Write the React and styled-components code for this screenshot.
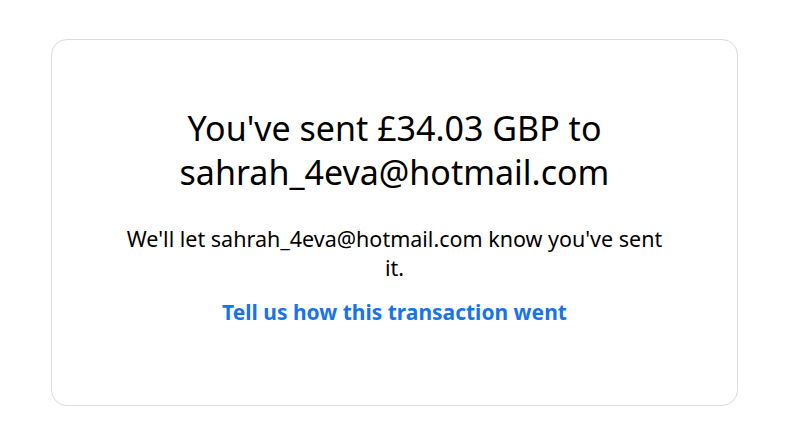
import React from 'react';
import styled, { createGlobalStyle } from 'styled-components';

const GlobalStyle = createGlobalStyle`
  body {
    margin: 0;
    background: #ffffff;
    font-family: "Noto Sans", "Open Sans", sans-serif;
    color: #000000;
  }
`;

const Page = styled.main`
  padding: 39px 0 0 51px;
`;

const Card = styled.section`
  box-sizing: border-box;
  width: 687px;
  height: 367px;
  border: 1px solid #dcdcd8;
  border-radius: 16px;
  padding: 66px 66px 0;
  text-align: center;
`;

const Title = styled.h1`
  margin: 0;
  font-size: 34px;
  font-weight: 400;
  line-height: 44px;
  padding: 0 40px;
`;

const Message = styled.p`
  margin: 30px 0 0;
  font-size: 21.5px;
  line-height: 29px;
`;

const FeedbackLink = styled.a`
  display: block;
  margin-top: 16px;
  font-size: 21px;
  line-height: 28px;
  font-weight: 700;
  color: #1a73e8;
  text-decoration: none;
  cursor: pointer;
`;

export default function App(){
  const email = 'sahrah_4eva@hotmail.com';
  const amount = '£34.03 GBP';

  return(
    <>
      <GlobalStyle />
      <Page>
        <Card>
          <Title>{ `You've sent ${ amount } to ${ email }` }</Title>
          <Message>{ `We'll let ${ email } know you've sent it.` }</Message>
          <FeedbackLink>Tell us how this transaction went</FeedbackLink>
        </Card>
      </Page>
    </>
  )
}
